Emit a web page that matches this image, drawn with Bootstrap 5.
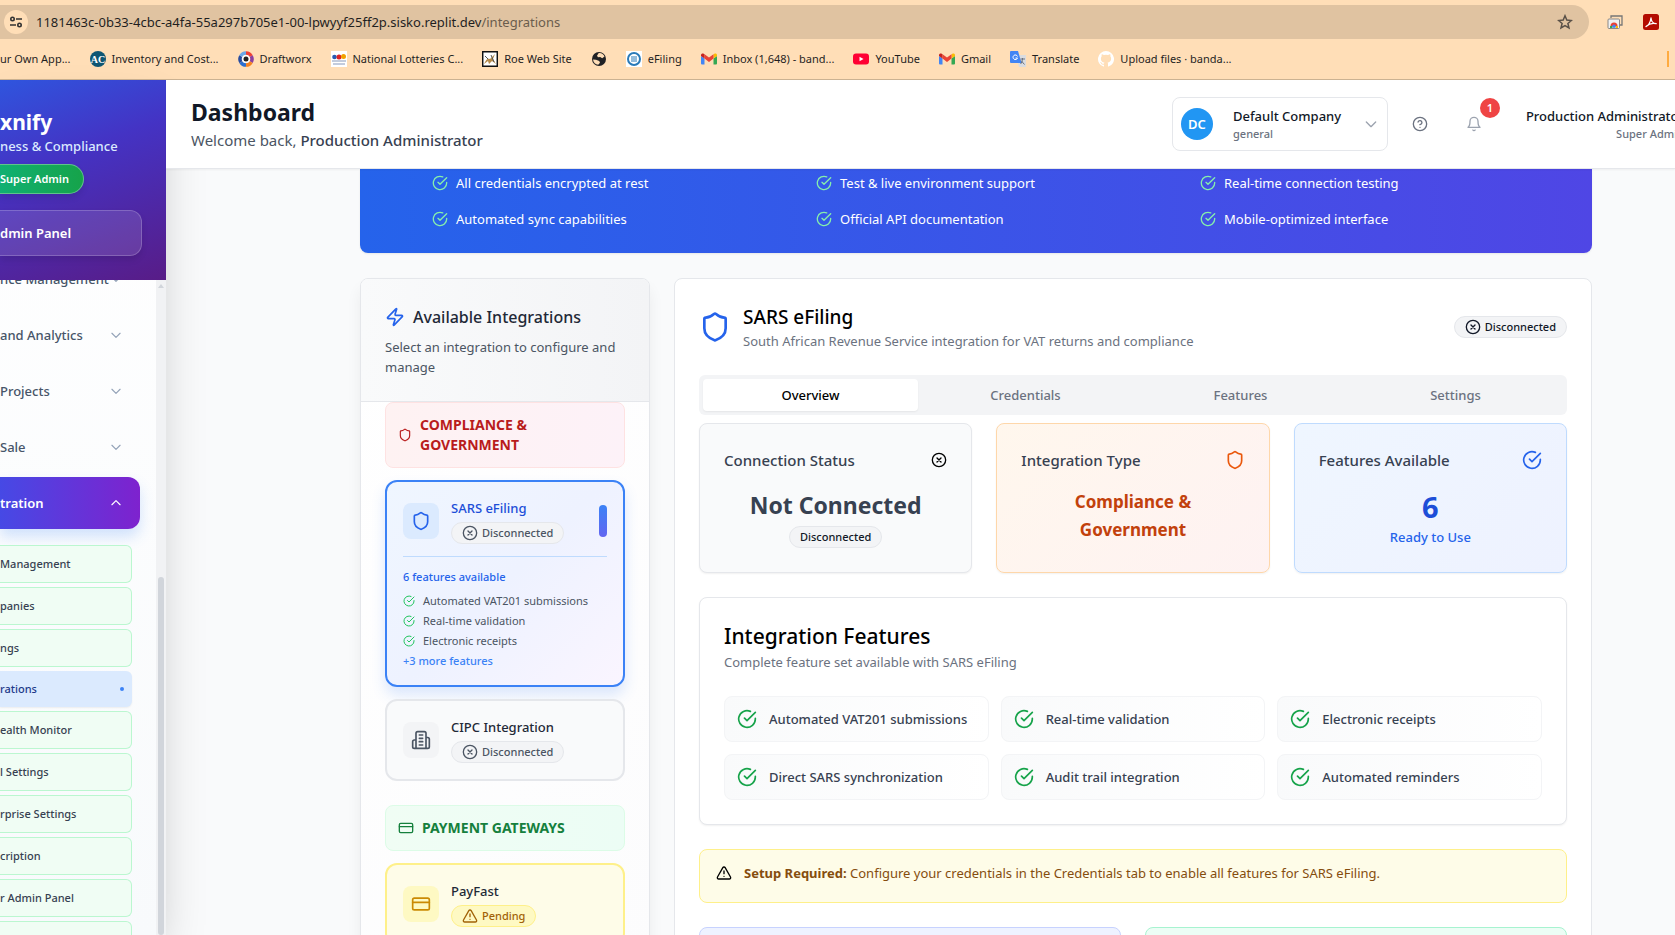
<!DOCTYPE html>
<html lang="en">
<head>
<meta charset="utf-8">
<meta name="viewport" content="width=device-width, initial-scale=1">
<title>Integrations</title>
<link href="https://cdn.jsdelivr.net/npm/bootstrap@5.3.0/dist/css/bootstrap.min.css" rel="stylesheet">
<style>
:root{--chrome:#ffdeb7;--line:#e5e7eb;--ink:#111827;--ink2:#374151;--muted:#6b7280;--blue:#2563eb}
body{font-family:"Noto Sans","Open Sans",sans-serif;font-size:13px;line-height:20px;color:var(--ink);background:#f9fafb}
a{color:inherit;text-decoration:none}
h1,h2,h3,h4,p{margin:0}
.ico{width:16px;height:16px;flex:none;fill:none;stroke:currentColor;stroke-width:2;stroke-linecap:round;stroke-linejoin:round}
.ico-12{width:12px;height:12px}.ico-20{width:20px;height:20px}.ico-32{width:32px;height:32px}
.fs-11{font-size:11px;line-height:16px}
.fs-15{font-size:15px;line-height:24px}
.medium{font-weight:500}.semi{font-weight:600}
.muted{color:var(--muted)}
.min0{min-width:0;min-height:0}
.mt-12{margin-top:12px}
.g-12{--bs-gutter-x:12px;--bs-gutter-y:12px}

/* browser bar */
.chrome-bar{background:var(--chrome);border-bottom:1px solid #cbb292;height:80px;padding-top:5px;color:#1f1f1f}
.omnibox{background:#e0c3a1;border-radius:0 17px 17px 0;height:34px;margin-right:86px;font-size:13px}
.url-path{color:#6b5d4d}
.site-info{width:24px;height:24px;background:var(--chrome);margin-left:4px}
.ext{width:16px;height:16px}
.ext-tray{width:86px;margin-left:-86px;padding-left:18px;gap:20px}
.marks{height:40px;font-size:11px;gap:19px;white-space:nowrap}
.marks a{display:flex;align-items:center;gap:6px}
.marks svg{width:16px;height:16px;flex:none}
.marks-end{width:2px;height:16px;background:#ffab40;margin-right:6px}

/* sidebar */
.side{width:166px;flex:none;background:linear-gradient(#fff,#f8fafc);box-shadow:0 25px 50px -12px rgba(0,0,0,.25);z-index:1}
.side-head{height:200px;padding-top:28px;background:linear-gradient(160deg,#2f55de 0%,#4433c4 38%,#581c87 100%);color:#fff;white-space:nowrap}
.brand{font-size:21px;line-height:28px;font-weight:700}
.tagline{color:#dbeafe}
.role-pill{width:84px;height:30px;border:1px solid #5fc48a;border-left:0;border-radius:0 15px 15px 0;background:linear-gradient(90deg,#10b072,#16a34a);box-shadow:0 4px 6px rgba(0,0,0,.1);font-size:11px}
.panel-btn{width:142px;height:46px;margin-top:16px;border:1px solid rgba(255,255,255,.2);border-left:0;border-radius:0 12px 12px 0;background:rgba(255,255,255,.12);color:#fff;text-align:left;padding:0;box-shadow:0 4px 6px rgba(0,0,0,.1)}
.side-scroll{overflow:hidden}
.side-nav{margin-top:-27px;white-space:nowrap}
.nav-row{width:140px;height:52px;margin-bottom:4px;padding:0 17px 0 0;border:0;background:none;color:#475569;display:flex;align-items:center;justify-content:space-between;font-weight:500}
.nav-row .ico{width:14px;height:14px;color:#94a3b8}
.nav-row.open{background:linear-gradient(90deg,#4649e5,#7e22ce);color:#fff;border-radius:0 12px 12px 0;box-shadow:0 8px 14px rgba(59,130,246,.22);font-weight:600}
.nav-row.open .ico{color:#fff}
.sub-list{margin-top:16px;gap:4px;width:132px}
.sub-list a{display:flex;align-items:center;justify-content:space-between;height:38px;border:1px solid #bbf7d0;border-left:0;border-radius:0 6px 6px 0;background:#f0fdf4;color:#374151;font-size:11px;font-weight:500}
.sub-list a.here{height:36px;border:0;background:#dbeafe;color:#1e3a8a;padding-right:8px;box-shadow:0 1px 2px rgba(0,0,0,.06)}
.here-dot{width:4px;height:4px;background:#3b82f6}
.track{width:10px;background:#f1f2f4;padding-top:4px;z-index:1}
.track-up{border:3px solid transparent;border-top:0;border-bottom:4px solid #d1d5db}
.thumb{width:6px;margin-top:289px;border-radius:3px;background:#d1d5db}

/* top bar */
.topbar{height:89px;background:#fff;border-bottom:1px solid var(--line);padding-left:25px;z-index:2;box-shadow:0 1px 2px rgba(0,0,0,.05)}
.page-title{font-size:23px;line-height:32px;font-weight:700}
.company{width:216px;height:54px;border:1px solid var(--line);border-radius:8px;background:#fff;padding:0 8px;text-align:left;color:var(--ink)}
.avatar{width:32px;height:32px;background:#2196f3;color:#fff;font-size:13px}
.plain-btn{border:0;background:none;padding:0;color:var(--muted);display:flex}
.bell-btn{margin-left:38px;color:#9ca3af}
.alert-count{top:-26px;left:14px;width:20px;height:20px;background:#ef4444;color:#fff;font-size:11px;line-height:20px}
.bell-btn .alert-count{top:-18px}
.user{width:150px;margin-left:43px}
.user-in{width:159px;white-space:nowrap}

/* content */
.content{padding:0 83px 0 194px;overflow:hidden}
.hero{background:linear-gradient(90deg,#2563eb,#4f46e5);border-radius:0 0 8px 8px;margin-bottom:1px;padding:2px 40px 10px;color:#fff;box-shadow:0 1px 2px rgba(0,0,0,.08)}
.hero .row>div{padding-left:32px;height:24px;margin-bottom:12px}
.hero .ico{color:#86efac}
.box{border:1px solid var(--line);border-radius:8px;background:#fff}
.list-card{background:linear-gradient(135deg,#fff,#fcfcfd);box-shadow:0 10px 15px rgba(0,0,0,.06);overflow:hidden}
.list-head{background:linear-gradient(90deg,#f9fafb,#f3f4f6);border-bottom:1px solid var(--line);padding:24px}
.list-head p{margin-top:6px;color:#4b5563}
.list-title{font-size:16px;line-height:28px;color:#1f2937;font-weight:500}
.group-tag{border:1px solid;border-radius:8px;padding:12px;font-size:14px;line-height:20px;font-weight:700;gap:8px}
.tag-red{background:linear-gradient(90deg,#fef2f2,#fdf2f8);border-color:#fee2e2;color:#b91c1c}
.tag-red .ico{width:14px;height:14px}
.tag-green{background:linear-gradient(90deg,#f0fdf4,#ecfdf5);border-color:#dcfce7;color:#15803d}
.conn{display:block;width:100%;text-align:left;border:2px solid var(--line);border-radius:12px;padding:16px;background:#f9fafb;color:#1f2937}
.conn.picked{border-color:#3b82f6;background:linear-gradient(135deg,#eff6ff,#eef2ff 50%,#faf5ff);box-shadow:0 8px 14px rgba(59,130,246,.18)}
.conn.picked .conn-name{color:#1d4ed8}
.conn.wait{border-color:#fef08a;background:#fefce8}
.conn-ico{width:36px;height:36px;border-radius:8px;background:#f3f4f6;color:#4b5563}
.picked .conn-ico{background:#dbeafe;color:var(--blue)}
.wait .conn-ico{background:#fef9c3;color:#ca8a04}
.marker{width:8px;height:32px;border-radius:4px;background:linear-gradient(#3b82f6,#6366f1)}
.chip{height:22px;border:1px solid var(--line);background:#f3f4f6;border-radius:11px;padding:0 10px;gap:4px;font-size:11px;font-weight:500;display:inline-flex;align-items:center;color:#4b5563}
.chip.dark{color:var(--ink)}
.chip.amber{background:#fef9c3;border-color:#fef08a;color:#a16207}
.feats{border-top:1px solid #bfdbfe;margin-top:12px;padding-top:12px;color:#4b5563}
.feats .ico{color:#22c55e}
.detail-head{padding:24px 0 0}
.detail-title{font-size:19px;line-height:28px;font-weight:500;color:#000}
.tabs{background:#f3f4f6;border-radius:6px;padding:4px}
.tabs button{flex:1 1 0;height:32px;border:0;border-radius:4px;background:none;color:var(--muted);font-weight:500}
.tabs button.active{background:#fff;color:#000;box-shadow:0 1px 2px rgba(0,0,0,.06)}
.stat{height:150px;padding:24px;box-shadow:0 1px 2px rgba(0,0,0,.06);border-radius:8px;border:1px solid var(--line);background:#f9fafb;color:var(--ink2)}
.stat-orange{background:linear-gradient(135deg,#fff7ed,#fef2f2);border-color:#fed7aa}
.stat-blue{background:linear-gradient(135deg,#eff6ff,#eef2ff);border-color:#bfdbfe}
.big{font-size:23px;line-height:34px;font-weight:700}
.kind{font-size:17px;line-height:28px;font-weight:700;color:#c2410c}
.num{font-size:29px;line-height:38px;font-weight:700;color:#1d4ed8}
.ready{line-height:22px;font-weight:500;color:var(--blue)}
.fcard{padding:24px;box-shadow:0 1px 2px rgba(0,0,0,.06)}
.fcard p{margin:2px 0 1px}
.fcard-title{font-size:21px;line-height:28px;font-weight:500;color:#000}
.feature{height:46px;border:1px solid #f3f4f6;border-radius:8px;background:linear-gradient(90deg,#f9fafb,#fff);padding-left:12px;gap:12px;color:var(--ink2);font-weight:500}
.feature .ico{color:#16a34a}
.notice{height:54px;border:1px solid #fef08a;border-radius:8px;background:#fefce8;padding:13px 16px;gap:12px;color:#854d0e}
.notice .ico{color:#000;margin-top:2px}
.next-card{height:120px;border:1px solid #c7d2fe;border-radius:8px;background:#eef2ff}
.next-card.mint{border-color:#a7f3d0;background:#ecfdf5}
</style>
</head>
<body>
<svg width="0" height="0" class="d-none" aria-hidden="true">
<symbol id="shield" viewBox="0 0 24 24"><path d="M20 13c0 5-3.5 7.5-7.66 8.95a1 1 0 0 1-.67-.01C7.5 20.5 4 18 4 13V6a1 1 0 0 1 1-1c2 0 4.500-1.200 6.240-2.720a1.170 1.170 0 0 1 1.520 0C14.510 3.810 17 5 19 5a1 1 0 0 1 1 1z"/></symbol>
<symbol id="check" viewBox="0 0 24 24"><path d="M22 11.080V12a10 10 0 1 1-5.930-9.140M9 11l3 3L22 4"/></symbol>
<symbol id="cross" viewBox="0 0 24 24"><circle cx="12" cy="12" r="10"/><path d="m15 9-6 6M9 9l6 6"/></symbol>
<symbol id="zap" viewBox="0 0 24 24"><path d="M4 14a1 1 0 0 1-.78-1.630l9.900-10.200a.5.5 0 0 1 .86.46l-1.920 6.020A1 1 0 0 0 13 10h7a1 1 0 0 1 .78 1.630l-9.900 10.200a.5.5 0 0 1-.86-.46l1.920-6.020A1 1 0 0 0 11 14z"/></symbol>
<symbol id="building" viewBox="0 0 24 24"><path d="M6 22V4a2 2 0 0 1 2-2h8a2 2 0 0 1 2 2v18ZM6 12H4a2 2 0 0 0-2 2v6a2 2 0 0 0 2 2h2M18 9h2a2 2 0 0 1 2 2v9a2 2 0 0 1-2 2h-2M10 6h4M10 10h4M10 14h4M10 18h4"/></symbol>
<symbol id="card" viewBox="0 0 24 24"><rect x="2" y="5" width="20" height="14" rx="2"/><path d="M2 10h20"/></symbol>
<symbol id="warn" viewBox="0 0 24 24"><path d="m21.730 18-8-14a2 2 0 0 0-3.480 0l-8 14A2 2 0 0 0 4 21h16a2 2 0 0 0 1.730-3M12 9v4M12 17h.01"/></symbol>
<symbol id="bell" viewBox="0 0 24 24"><path d="M6 8a6 6 0 0 1 12 0c0 7 3 9 3 9H3s3-2 3-9M10.300 21a1.940 1.940 0 0 0 3.400 0"/></symbol>
<symbol id="help" viewBox="0 0 24 24"><circle cx="12" cy="12" r="10"/><path d="M9.090 9a3 3 0 0 1 5.830 1c0 2-3 3-3 3M12 17h.01"/></symbol>
<symbol id="down" viewBox="0 0 24 24"><path d="m5 9 7 7 7-7"/></symbol>
<symbol id="up" viewBox="0 0 24 24"><path d="m5 15 7-7 7 7"/></symbol>
<symbol id="gmail" viewBox="0 0 16 16"><path fill="#4285f4" d="M1 13.500h2.500V7.500L0 5v7.500a1 1 0 0 0 1 1z"/><path fill="#34a853" d="M12.500 13.500H15a1 1 0 0 0 1-1V5l-3.500 2.500z"/><path fill="#fbbc04" d="M12.500 3.500v4L16 5V4c0-1.600-1.700-2-2.700-1.200z"/><path fill="#ea4335" d="M3.500 7.500V3.200L8 6.600l4.500-3.400v4.300L8 11z"/><path fill="#c5221f" d="M0 4v1l3.500 2.500V3.200l-.8-.5C1.700 2 0 2.500 0 4z"/></symbol>
</svg>

<div class="vh-100 d-flex flex-column overflow-hidden">
<header class="chrome-bar flex-shrink-0">
  <div class="d-flex align-items-center">
    <div class="omnibox d-flex align-items-center flex-grow-1">
      <span class="site-info rounded-circle d-flex align-items-center justify-content-center"><svg width="14" height="14" viewBox="0 0 14 14" fill="none" stroke="#333" stroke-width="1.600"><circle cx="3.500" cy="4" r="1.700"/><path d="M7 4h6M1 10h6"/><circle cx="10.500" cy="10" r="1.700"/></svg></span>
      <span class="ms-2 flex-grow-1">1181463c-0b33-4cbc-a4fa-55a297b705e1-00-lpwyyf25ff2p.sisko.replit.dev<span class="url-path">/integrations</span></span>
      <button class="plain-btn me-3" aria-label="Bookmark this tab"><svg width="16" height="16" viewBox="0 0 16 16" fill="none" stroke="#5a5148" stroke-width="1.500"><path d="m8 1.800 1.800 4.300 4.600.4-3.500 3 1.100 4.500L8 11.600 4 14l1.100-4.500-3.500-3 4.600-.4z"/></svg></button>
    </div>
    <div class="ext-tray d-flex align-items-center">
      <svg class="ext" viewBox="0 0 16 16"><path d="M4 4V2h11v9h-2" fill="none" stroke="#777" stroke-width="1.300"/><rect x="1" y="5" width="11.500" height="9.500" rx="1" fill="#f1f1f1" stroke="#888"/><path d="M3.500 12a3.500 3.500 0 0 1 7 0z" fill="#ea4335"/><path d="M3 12h2.500v2H3z" fill="#34a853"/><path d="M8.500 12H11v2H8.500z" fill="#fbbc04"/><circle cx="7" cy="12.300" r="1.700" fill="#4285f4"/></svg>
      <svg class="ext" viewBox="0 0 16 16"><rect width="16" height="16" rx="2.500" fill="#b30b00"/><path d="M3 12.500c2-.5 4.500-4 5-8.500.2 3.500 2.500 5.700 5.200 5.700-3.200-.8-7.500.3-10.200 2.800z" fill="none" stroke="#fff" stroke-width="1.300" stroke-linejoin="round"/></svg>
    </div>
  </div>
  <nav class="marks d-flex align-items-center" aria-label="Bookmarks">
    <a href="#">ur Own App...</a>
    <a href="#"><svg viewBox="0 0 16 16"><circle cx="8" cy="8" r="8" fill="#0f5673"/><text x="8" y="12" font-size="10" font-weight="700" text-anchor="middle" fill="#fff" font-family="Liberation Serif,serif">AC</text></svg>Inventory and Cost...</a>
    <a href="#"><svg viewBox="0 0 16 16" fill="none" stroke-width="3.500"><path stroke="#ef4136" d="M8 2a6 6 0 0 1 5.200 3"/><path stroke="#8b3fa0" d="M13.200 5a6 6 0 0 1 0 6"/><path stroke="#f58220" d="M13.200 11A6 6 0 0 1 8 14"/><path stroke="#2c6fd1" d="M8 14a6 6 0 0 1-5.200-3"/><path stroke="#274b9f" d="M2.800 11a6 6 0 0 1 0-6"/><path stroke="#6aa7e8" d="M2.800 5A6 6 0 0 1 8 2"/><circle cx="8" cy="8" r="4" fill="#fff"/><circle cx="8" cy="8" r="2.500" fill="#222"/></svg>Draftworx</a>
    <a href="#"><svg viewBox="0 0 16 16"><path fill="#fff" d="M0 0h16v16H0z"/><circle cx="3.500" cy="6" r="2.300" fill="#2b5bb0"/><circle cx="8" cy="6" r="2.500" fill="#d22"/><circle cx="12.500" cy="5.500" r="2.500" fill="#f2a100"/><path d="M1 10h14M2 13h12" stroke="#8899bb"/></svg>National Lotteries C...</a>
    <a href="#"><svg viewBox="0 0 16 16"><path fill="#fff" stroke="#111" stroke-width="1.500" d="M.7.7h14.600v14.600H.7z"/><path d="M2 13c2-5 4-6 6-5l5-5-2 5 3 5-4-3-3 3-1-3z" fill="#b58a4a"/><path d="m3 5 3 3M9 4l3 7" stroke="#555"/></svg>Roe Web Site</a>
    <a href="#" aria-label="Site"><svg viewBox="0 0 16 16"><circle cx="8" cy="8" r="7" fill="#202124"/><path d="M7.500 2.200c2.500-.6 5 .8 6 3.300l-2.300 1.700-2-1.200-2.200.2-1-1.500zM2 8.500l3 .2 3.200 1.300.8 1.700-1.800 2C4.500 13.500 2.200 11.500 2 8.500z" fill="#ffdeb7"/></svg></a>
    <a href="#"><svg viewBox="0 0 16 16"><path fill="#fff" d="M0 0h16v16H0z"/><circle cx="8" cy="8" r="6" fill="none" stroke="#2a7ab8" stroke-width="2"/><path d="M5 6h6M5 8h6M5 10h6" stroke="#2a7ab8" stroke-width="1.200"/></svg>eFiling</a>
    <a href="#"><svg><use href="#gmail"/></svg>Inbox (1,648) - band...</a>
    <a href="#"><svg viewBox="0 0 16 16"><rect y="2.500" width="16" height="11" rx="3" fill="#f03"/><path fill="#fff" d="m6.500 5.700 4 2.300-4 2.300z"/></svg>YouTube</a>
    <a href="#"><svg><use href="#gmail"/></svg>Gmail</a>
    <a href="#"><svg viewBox="0 0 16 16"><path fill="#dadce0" d="M6 4h10v12H9z"/><path fill="#4285f4" d="M1 0h7l3.500 12H1a1 1 0 0 1-1-1V1a1 1 0 0 1 1-1z"/><path d="M7.500 5.500A2.300 2.300 0 1 0 7.500 7H5.500" fill="none" stroke="#fff"/><path d="M10.500 8h4.500M12.500 7v1c0 2-1 4-2 5M11 9.500l3.500 4" stroke="#6b7280" fill="none"/></svg>Translate</a>
    <a href="#"><svg viewBox="0 0 16 16"><path fill="#fff" d="M8 0a8 8 0 0 0-2.500 15.600c.4 0 .5-.2.5-.4v-1.500c-2.200.5-2.700-.9-2.700-.9-.4-1-.9-1.200-.9-1.200-.7-.5.1-.5.1-.5.8 0 1.200.8 1.200.8.700 1.200 1.900.9 2.300.7 0-.5.300-.9.500-1.100-1.800-.2-3.600-.9-3.600-4 0-.9.300-1.600.8-2.200 0-.2-.3-1 .1-2.100 0 0 .7-.2 2.200.8a7.600 7.600 0 0 1 4 0c1.500-1 2.200-.8 2.200-.8.400 1.100.2 1.900.1 2.100.5.600.8 1.300.8 2.200 0 3.100-1.900 3.800-3.600 4 .3.300.5.700.5 1.500v2.200c0 .2.100.5.500.4A8 8 0 0 0 8 0z"/></svg>Upload files · banda...</a>
    <span class="marks-end ms-auto"></span>
  </nav>
</header>

<div class="d-flex flex-grow-1 min0">
  <aside class="side d-flex flex-column">
    <div class="side-head flex-shrink-0">
      <div class="brand">xnify</div>
      <div class="tagline medium">ness &amp; Compliance</div>
      <div class="role-pill semi d-flex align-items-center mt-2">Super Admin</div>
      <button class="panel-btn semi">dmin Panel</button>
    </div>
    <div class="d-flex flex-grow-1 min0">
      <nav class="side-scroll flex-grow-1" aria-label="Main">
        <div class="side-nav">
          <button class="nav-row">nce Management<svg class="ico"><use href="#down"/></svg></button>
          <button class="nav-row">and Analytics<svg class="ico"><use href="#down"/></svg></button>
          <button class="nav-row">Projects<svg class="ico"><use href="#down"/></svg></button>
          <button class="nav-row">Sale<svg class="ico"><use href="#down"/></svg></button>
          <button class="nav-row open">tration<svg class="ico"><use href="#up"/></svg></button>
          <div class="sub-list d-flex flex-column">
            <a href="#">Management</a><a href="#">panies</a><a href="#">ngs</a>
            <a href="#" class="here">rations<span class="here-dot rounded-circle"></span></a>
            <a href="#">ealth Monitor</a><a href="#">l Settings</a><a href="#">rprise Settings</a><a href="#">cription</a><a href="#">r Admin Panel</a><a href="#" aria-label="More"></a>
          </div>
        </div>
      </nav>
      <div class="track d-flex flex-column align-items-center flex-shrink-0"><span class="track-up"></span><span class="thumb flex-grow-1"></span></div>
    </div>
  </aside>

  <div class="flex-grow-1 min0 d-flex flex-column">
    <header class="topbar d-flex align-items-center flex-shrink-0 position-relative">
      <div class="me-auto">
        <h1 class="page-title">Dashboard</h1>
        <p class="fs-15 text-nowrap" style="color:#4b5563">Welcome back, <span class="medium" style="color:#374151">Production Administrator</span></p>
      </div>
      <button class="company d-flex align-items-center flex-shrink-0">
        <span class="avatar rounded-circle semi d-flex align-items-center justify-content-center">DC</span>
        <span class="d-flex flex-column flex-grow-1 ps-3 ms-1"><span class="medium">Default Company</span><span class="fs-11 muted medium">general</span></span>
        <svg class="ico" style="color:#9ca3af"><use href="#down"/></svg>
      </button>
      <button class="plain-btn ms-4" aria-label="Help"><svg class="ico"><use href="#help"/></svg></button>
      <button class="plain-btn bell-btn position-relative" aria-label="Notifications"><svg class="ico"><use href="#bell"/></svg><span class="alert-count position-absolute rounded-circle semi">1</span></button>
      <div class="user flex-shrink-0"><div class="user-in text-end"><div class="medium">Production Administrator</div><div class="fs-11 muted medium">Super Admin</div></div></div>
    </header>

    <main class="content flex-grow-1 min0">
      <section class="hero">
        <div class="row gx-0">
          <div class="col-4 d-flex align-items-center gap-2"><svg class="ico"><use href="#check"/></svg>All credentials encrypted at rest</div>
          <div class="col-4 d-flex align-items-center gap-2"><svg class="ico"><use href="#check"/></svg>Test &amp; live environment support</div>
          <div class="col-4 d-flex align-items-center gap-2"><svg class="ico"><use href="#check"/></svg>Real-time connection testing</div>
          <div class="col-4 d-flex align-items-center gap-2"><svg class="ico"><use href="#check"/></svg>Automated sync capabilities</div>
          <div class="col-4 d-flex align-items-center gap-2"><svg class="ico"><use href="#check"/></svg>Official API documentation</div>
          <div class="col-4 d-flex align-items-center gap-2"><svg class="ico"><use href="#check"/></svg>Mobile-optimized interface</div>
        </div>
      </section>

      <div class="row gx-4 pt-4 flex-nowrap">
        <div class="col-3">
          <section class="box list-card">
            <div class="list-head">
              <h2 class="list-title d-flex align-items-center gap-2"><svg class="ico ico-20" style="color:#2563eb"><use href="#zap"/></svg>Available Integrations</h2>
              <p>Select an integration to configure and manage</p>
            </div>
            <div class="px-4 pb-4">
              <h3 class="group-tag tag-red d-flex align-items-center"><svg class="ico"><use href="#shield"/></svg><span>COMPLIANCE &amp;<br>GOVERNMENT</span></h3>
              <button class="conn picked mt-12">
                <span class="d-flex align-items-center">
                  <span class="conn-ico d-flex align-items-center justify-content-center"><svg class="ico ico-20"><use href="#shield"/></svg></span>
                  <span class="d-flex flex-column align-items-start gap-1 ms-2 ps-1 me-auto"><span class="conn-name medium">SARS eFiling</span><span class="chip"><svg class="ico"><use href="#cross"/></svg>Disconnected</span></span>
                  <span class="marker"></span>
                </span>
                <span class="feats d-flex flex-column gap-1 fs-11">
                  <span class="medium mb-1" style="color:#2563eb">6 features available</span>
                  <span class="d-flex align-items-center gap-2"><svg class="ico ico-12"><use href="#check"/></svg>Automated VAT201 submissions</span>
                  <span class="d-flex align-items-center gap-2"><svg class="ico ico-12"><use href="#check"/></svg>Real-time validation</span>
                  <span class="d-flex align-items-center gap-2"><svg class="ico ico-12"><use href="#check"/></svg>Electronic receipts</span>
                  <span class="medium" style="color:#3b82f6">+3 more features</span>
                </span>
              </button>
              <button class="conn mt-12">
                <span class="d-flex align-items-center">
                  <span class="conn-ico d-flex align-items-center justify-content-center"><svg class="ico ico-20"><use href="#building"/></svg></span>
                  <span class="d-flex flex-column align-items-start gap-1 ms-2 ps-1"><span class="medium">CIPC Integration</span><span class="chip"><svg class="ico"><use href="#cross"/></svg>Disconnected</span></span>
                </span>
              </button>
              <h3 class="group-tag tag-green d-flex align-items-center mt-4"><svg class="ico"><use href="#card"/></svg>PAYMENT GATEWAYS</h3>
              <button class="conn wait mt-12">
                <span class="d-flex align-items-center">
                  <span class="conn-ico d-flex align-items-center justify-content-center"><svg class="ico ico-20"><use href="#card"/></svg></span>
                  <span class="d-flex flex-column align-items-start gap-1 ms-2 ps-1"><span class="medium">PayFast</span><span class="chip amber"><svg class="ico"><use href="#warn"/></svg>Pending</span></span>
                </span>
              </button>
            </div>
          </section>
        </div>

        <div class="col-9">
          <section class="box px-4 pb-4">
            <div class="detail-head d-flex align-items-center">
              <svg class="ico ico-32" style="color:#2563eb"><use href="#shield"/></svg>
              <div class="ms-2 ps-1 me-auto"><h2 class="detail-title">SARS eFiling</h2><p class="muted">South African Revenue Service integration for VAT returns and compliance</p></div>
              <span class="chip dark"><svg class="ico"><use href="#cross"/></svg>Disconnected</span>
            </div>
            <div class="tabs d-flex mt-4" role="tablist">
              <button class="active" role="tab" aria-selected="true">Overview</button><button role="tab">Credentials</button><button role="tab">Features</button><button role="tab">Settings</button>
            </div>
            <div class="row gx-4 pt-2">
              <div class="col-4"><div class="stat">
                <div class="d-flex align-items-center justify-content-between"><h3 class="fs-15 medium">Connection Status</h3><svg class="ico" style="color:#000"><use href="#cross"/></svg></div>
                <div class="text-center mt-3"><div class="big">Not Connected</div><span class="chip dark mt-1">Disconnected</span></div>
              </div></div>
              <div class="col-4"><div class="stat stat-orange">
                <div class="d-flex align-items-center justify-content-between"><h3 class="fs-15 medium">Integration Type</h3><svg class="ico ico-20" style="color:#ea580c"><use href="#shield"/></svg></div>
                <div class="text-center mt-3 kind">Compliance &amp;<br>Government</div>
              </div></div>
              <div class="col-4"><div class="stat stat-blue">
                <div class="d-flex align-items-center justify-content-between"><h3 class="fs-15 medium">Features Available</h3><svg class="ico ico-20" style="color:#2563eb"><use href="#check"/></svg></div>
                <div class="text-center mt-3"><div class="num">6</div><div class="ready">Ready to Use</div></div>
              </div></div>
            </div>
            <div class="box fcard mt-4">
              <h2 class="fcard-title">Integration Features</h2>
              <p class="muted">Complete feature set available with SARS eFiling</p>
              <div class="row g-12 mt-12">
                <div class="col-4"><div class="feature d-flex align-items-center"><svg class="ico ico-20"><use href="#check"/></svg>Automated VAT201 submissions</div></div>
                <div class="col-4"><div class="feature d-flex align-items-center"><svg class="ico ico-20"><use href="#check"/></svg>Real-time validation</div></div>
                <div class="col-4"><div class="feature d-flex align-items-center"><svg class="ico ico-20"><use href="#check"/></svg>Electronic receipts</div></div>
                <div class="col-4"><div class="feature d-flex align-items-center"><svg class="ico ico-20"><use href="#check"/></svg>Direct SARS synchronization</div></div>
                <div class="col-4"><div class="feature d-flex align-items-center"><svg class="ico ico-20"><use href="#check"/></svg>Audit trail integration</div></div>
                <div class="col-4"><div class="feature d-flex align-items-center"><svg class="ico ico-20"><use href="#check"/></svg>Automated reminders</div></div>
              </div>
            </div>
            <div class="notice d-flex mt-4"><svg class="ico"><use href="#warn"/></svg><p><strong>Setup Required:</strong> Configure your credentials in the Credentials tab to enable all features for SARS eFiling.</p></div>
            <div class="row gx-4 pt-4"><div class="col-6"><div class="next-card"></div></div><div class="col-6"><div class="next-card mint"></div></div></div>
          </section>
        </div>
      </div>
    </main>
  </div>
</div>
</div>
<script src="https://cdn.jsdelivr.net/npm/bootstrap@5.3.0/dist/js/bootstrap.bundle.min.js"></script>
</body>
</html>
